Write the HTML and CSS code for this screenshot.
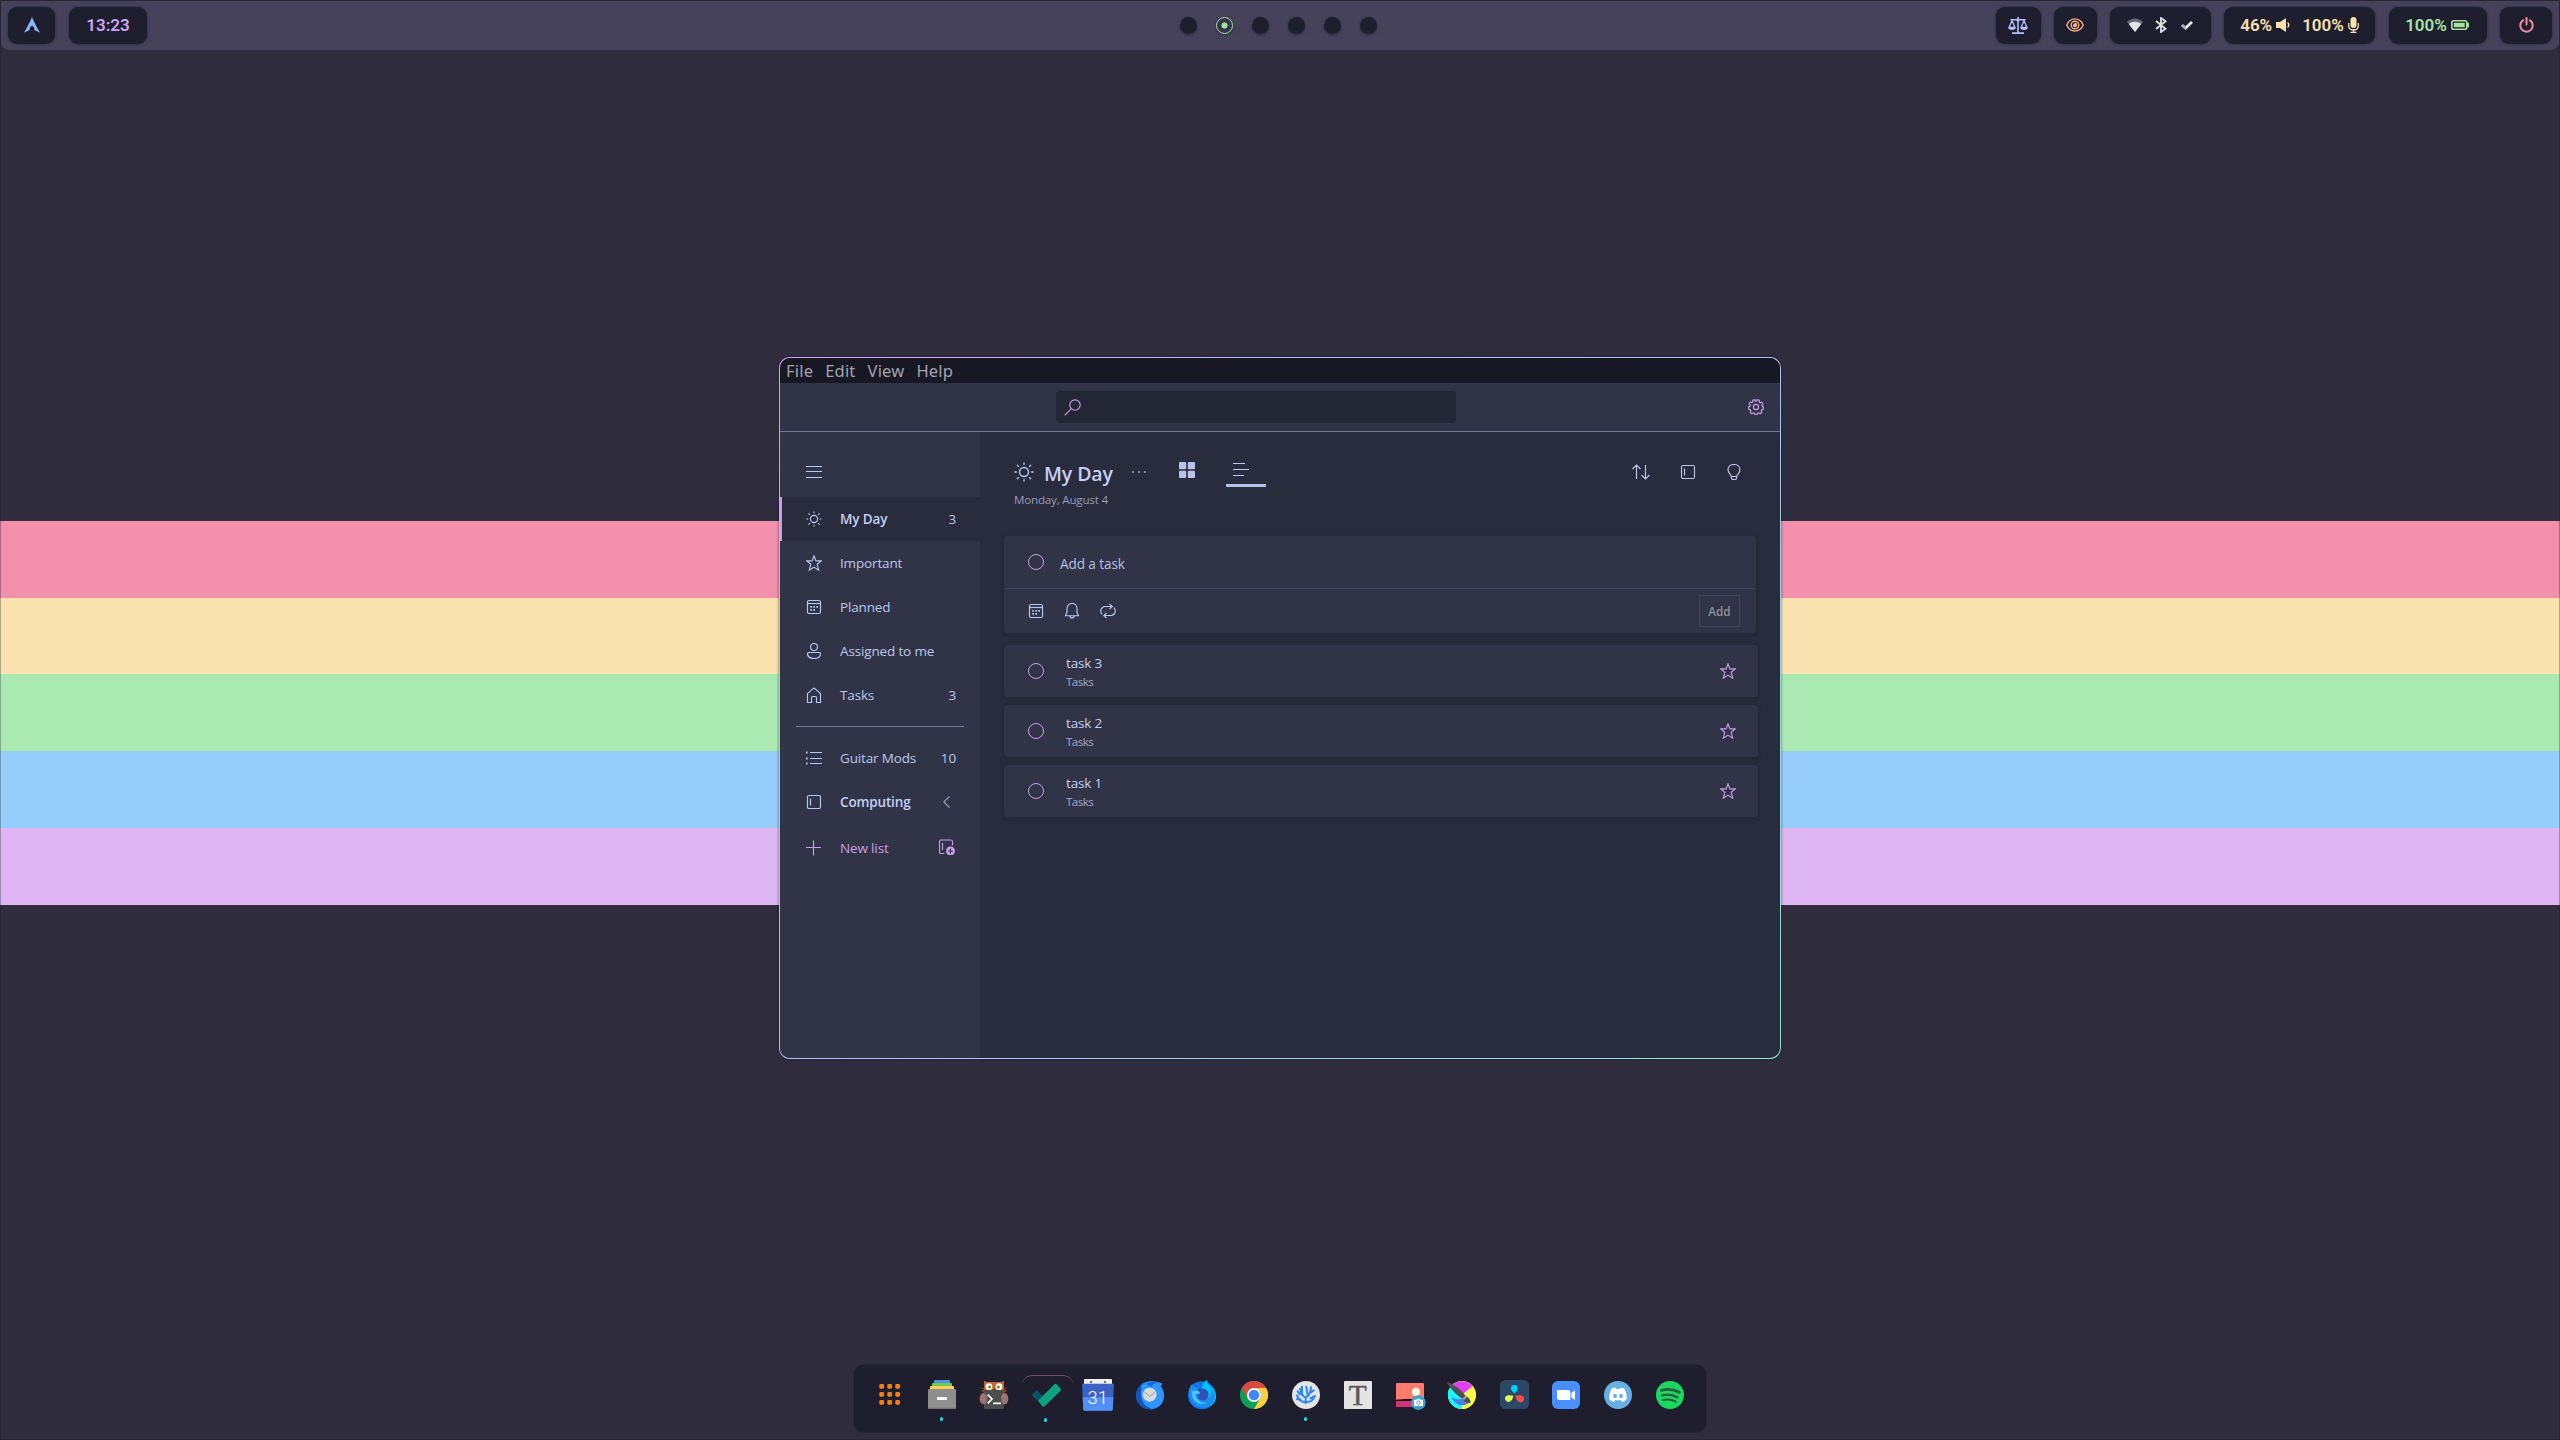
FILE: index.html
```html
<!DOCTYPE html>
<html lang="en">
<head>
<meta charset="utf-8">
<title>Desktop</title>
<link rel="stylesheet" href="styles.css">
</head>
<body>
<svg class="defs" width="0" height="0" aria-hidden="true">
  <symbol id="sun" viewBox="0 0 20 20"><circle cx="10" cy="10" r="4.5"/><path d="M10 .5v2.3M10 17.2v2.3M.5 10h2.3M17.2 10h2.3M3 3l1.8 1.8M15.2 15.2L17 17M3 17l1.8-1.8M15.2 4.8L17 3"/></symbol>
  <symbol id="star" viewBox="0 0 16 16"><path d="M8 .9l1.9 5H15.200l-4 3.400 1.500 5.900L8 12.100 3.300 15.200l1.500-5.900-4-3.400h5.300z"/></symbol>
  <symbol id="calendar" viewBox="0 0 16 16"><rect x="1.500" y="1.500" width="13" height="13" rx="1.500"/><path d="M1.500 4.500h13"/><path class="solid" d="M7.300 7h1.700v1.700H7.300zM10.300 7H12v1.700h-1.700zM4.300 7H6v1.700H4.300zM4.300 10H6v1.700H4.300zM7.300 10H9v1.700H7.300z"/></symbol>
  <symbol id="person" viewBox="0 0 16 16"><circle cx="8" cy="4" r="3.500"/><path d="M1.500 10.500a1 1 0 0 1 1-1h11a1 1 0 0 1 1 1c0 3.300-3 5-6.500 5s-6.500-1.700-6.500-5z"/></symbol>
  <symbol id="home" viewBox="0 0 16 16"><path d="M1.500 6.600L8 .9l6.500 5.700v8.900H10.500V10.500a1 1 0 0 0-1-1h-3a1 1 0 0 0-1 1v5H1.500z"/></symbol>
  <symbol id="book" viewBox="0 0 16 16"><rect x="1.500" y="1.500" width="13" height="13" rx="1.500"/><path d="M4.500 4.500v7"/></symbol>
</svg>

<header class="topbar">
  <div class="bar-left">
    <div class="pill pill-arch">
      <svg width="16" height="16" viewBox="0 0 16 16"><path fill="#89b4fa" d="M8 0c1.900 4.300 4.200 9.500 8 15.600-2.200-1.100-3.900-1.900-5.600-2.400.1-2.600-1-4.200-2.400-4.200s-2.500 1.600-2.400 4.200C3.900 13.700 2.200 14.500 0 15.600 3.800 9.500 6.100 4.300 8 0z"/></svg>
    </div>
    <div class="pill pill-clock">13:23</div>
  </div>
  <div class="workspaces">
    <i class="ws"></i><i class="ws ws-on"></i><i class="ws"></i><i class="ws"></i><i class="ws"></i><i class="ws"></i>
  </div>
  <div class="bar-right">
    <div class="pill pill-scale">
      <svg width="20" height="17" viewBox="0 0 20 17" fill="none" stroke="#b4befe" stroke-width="1.600"><path d="M2.500 2.800h15M10 0v15.500M4 16.100h12"/><path d="M4 3.500L1 10.500h6zM16 3.500l-3 7h6z" stroke-width="1.300"/><path d="M.4 10.200h7.200a3.600 2.700 0 0 1-7.200 0zM12.400 10.200h7.200a3.600 2.700 0 0 1-7.200 0z" fill="#b4befe" stroke="none"/><circle cx="10" cy="3" r="1.500" fill="#b4befe" stroke="none"/></svg>
    </div>
    <div class="pill pill-eye">
      <svg width="18" height="14" viewBox="0 0 18 14" fill="none" stroke="#fab387" stroke-width="1.400"><path d="M.8 7C2.300 3.400 5.300 .9 9 .9S15.700 3.400 17.200 7C15.700 10.600 12.700 13.100 9 13.100S2.300 10.600 .8 7z"/><circle cx="9" cy="7" r="3.800"/><path d="M6.800 7A2.200 2.200 0 0 0 9 9.200 2.200 2.200 0 0 0 9 4.800z" fill="#fab387" stroke="none"/></svg>
    </div>
    <div class="pill pill-tray">
      <svg width="16" height="14" viewBox="0 0 16 14"><path fill="#6a6a74" d="M0 4C4.300-.8 11.700-.8 16 4L8 14z"/><path fill="#e4e4e4" d="M1.800 5.900c3.600-3 8.800-3 12.400 0L8 14z"/></svg>
      <svg width="12" height="16" viewBox="0 0 12 16" fill="none" stroke="#dcdcdc" stroke-width="1.900"><path d="M1 4l9.500 7.700L6 15V1l4.500 3.300L1 12"/></svg>
      <svg width="12" height="9" viewBox="0 0 12 9"><path d="M0 5l2-1.700 2.500 2L10 0l2 1.800L4.700 9z" fill="#e8e8e8"/><path d="M0 5l2-1.700 2.800 2.300L4.700 9z" fill="#aaa"/></svg>
    </div>
    <div class="pill pill-audio">
      <span>46%</span>
      <svg class="speaker" width="14" height="14" viewBox="0 0 14 14"><path fill="#f9e2af" d="M0 4h4l6-4v14L4 10H0z"/><path d="M11.500 4.500c1.600 1.200 1.600 3.800 0 5" fill="none" stroke="#f9e2af" stroke-width="1.500"/></svg>
      <span>100%</span>
      <svg class="mic" width="11" height="16" viewBox="0 0 11 16"><rect x="2.500" width="6" height="11" rx="3" fill="#f9e2af"/><path d="M.7 6v2.500C.7 11 2.500 13 5.500 13s4.800-2 4.800-4.500V6M5.500 13v2.500M2.500 15.300h6" fill="none" stroke="#f9e2af" stroke-width="1.300"/></svg>
    </div>
    <div class="pill pill-battery">
      <span>100%</span>
      <svg width="18" height="10" viewBox="0 0 18 10"><rect x=".8" y=".8" width="14.900" height="8.400" rx="1.800" fill="none" stroke="#a6e3a1" stroke-width="1.600"/><rect x="2.800" y="2.800" width="10.900" height="4.400" fill="#a6e3a1"/><rect x="16" y="2.500" width="2" height="5" rx=".8" fill="#a6e3a1"/></svg>
    </div>
    <div class="pill pill-power">
      <svg width="15" height="16" viewBox="0 0 15 16" fill="none" stroke="#f38ba8" stroke-width="2" stroke-linecap="round"><path d="M7.500 1v6.500M4 3.400a6.200 6.200 0 1 0 7 0"/></svg>
    </div>
  </div>
</header>

<main class="desktop">
  <div class="stripes"><i class="pink"></i><i class="yellow"></i><i class="green"></i><i class="blue"></i><i class="purple"></i></div>
</main>

<section class="window">
  <div class="app">
    <nav class="menubar"><span>File</span><span>Edit</span><span>View</span><span>Help</span></nav>
    <div class="appbar">
      <div class="search"><svg class="line" width="17" height="17" viewBox="0 0 17 17"><circle cx="11" cy="6" r="5.200"/><path d="M7.300 9.700L.7 16.300"/></svg></div>
      <svg class="line gear" width="16" height="16" viewBox="0 0 16 16"><circle cx="8" cy="8" r="2.600"/><path d="M6.900 .7l.5 1.500h1.200L9.100 .7l2.200.6-.1 1.700 1 .8 1.600-.6 1.200 1.900-1.200 1.200.3 1.200 1.400.500-.2 2.200-1.500.4-.6 1.100.7 1.600-1.800 1.400-1.400-.9-1.100.4-.5 1.400H7l-.5-1.400-1.200-.4-1.400.9-1.700-1.400.6-1.600-.6-1.100-1.500-.4-.2-2.200L2 7.300l.3-1.200L1 4.900l1.300-1.900 1.600.6 1-.8-.1-1.600z"/></svg>
    </div>
    <div class="body">
      <aside class="sidebar">
        <div class="burger"><svg class="line" width="16" height="12" viewBox="0 0 16 12"><path d="M0 .5h16M0 5.500h16M0 11.500h16"/></svg></div>
        <div class="nav on"><svg class="line"><use href="#sun"/></svg><b>My Day</b><span>3</span></div>
        <div class="nav"><svg class="line"><use href="#star"/></svg><span>Important</span></div>
        <div class="nav"><svg class="line"><use href="#calendar"/></svg><span>Planned</span></div>
        <div class="nav"><svg class="line"><use href="#person"/></svg><span>Assigned to me</span></div>
        <div class="nav"><svg class="line"><use href="#home"/></svg><span>Tasks</span><span>3</span></div>
        <hr class="rule">
        <div class="nav"><svg class="line" viewBox="0 0 16 16"><path d="M4 2.500h12M4 8.500h12M4 13.500h12"/><path d="M0 2.500h1.600M0 8.500h1.600M0 13.500h1.600" stroke-width="2"/></svg><span>Guitar Mods</span><span>10</span></div>
        <div class="nav"><svg class="line"><use href="#book"/></svg><b>Computing</b><svg class="line chevron" viewBox="0 0 7 12"><path d="M6.500 .5L.8 6l5.700 5.500"/></svg></div>
        <div class="nav new"><svg class="line" viewBox="0 0 16 16"><path d="M7.500 .5v15M0 7.500h15"/></svg><span>New list</span><svg class="line" viewBox="0 0 16 16"><path d="M5.500 14.500H2A1.500 1.500 0 0 1 .5 13V2.500A1.500 1.500 0 0 1 2 1h10a1.500 1.500 0 0 1 1.500 1.500v4M3.500 4v7"/><circle class="solid" cx="11.500" cy="12" r="4.500"/><path d="M11.500 9.500v5M9 12h5" class="cut"/></svg></div>
      </aside>
      <div class="content">
        <div class="toolbar">
          <svg class="line big" viewBox="0 0 20 20"><use href="#sun"/></svg>
          <h1>My Day</h1>
          <svg class="dots" width="14" height="2" viewBox="0 0 14 2"><circle cx="1" cy="1" r="1"/><circle cx="7" cy="1" r="1"/><circle cx="13" cy="1" r="1"/></svg>
          <svg class="grid" width="16" height="16" viewBox="0 0 16 16"><rect width="7.200" height="7.200" rx="1"/><rect x="8.800" width="7.200" height="7.200" rx="1"/><rect y="8.800" width="7.200" height="7.200" rx="1"/><rect x="8.800" y="8.800" width="7.200" height="7.200" rx="1"/></svg>
          <div class="tab"><svg class="line" width="16" height="14" viewBox="0 0 16 14"><path d="M0 .5h12M0 6.500h16M0 12.500h11"/></svg></div>
          <div class="tools">
            <svg class="line" width="18" height="16" viewBox="0 0 18 16"><path d="M4.500 15V1M.5 5l4-4 4 4M13.500 1v14M9.500 11l4 4 4-4"/></svg>
            <svg class="line" width="16" height="16"><use href="#book"/></svg>
            <svg class="line" width="14" height="16" viewBox="0 0 14 16"><path d="M4.300 12.500C4 10.500 1 9 1 5.800 1 2.800 3.500.5 7 .5s6 2.300 6 5.300c0 3.200-3 4.700-3.300 6.700zM4.300 12.500l.3 2a1.200 1.200 0 0 0 1.200 1h2.400a1.200 1.200 0 0 0 1.200-1l.3-2"/></svg>
          </div>
        </div>
        <p class="date">Monday, August 4</p>
        <div class="composer">
          <div class="entry"><i class="ring"></i><span>Add a task</span></div>
          <div class="options">
            <svg class="line" width="16" height="16"><use href="#calendar"/></svg>
            <svg class="line" width="16" height="16" viewBox="0 0 16 16"><path d="M8 .5c3 0 5 2.200 5 5V9.500l1.500 3.200H1.500L3 9.500V5.500c0-2.800 2-5 5-5zM6 12.700a2 2.300 0 0 0 4 0"/></svg>
            <svg class="line" width="16" height="16" viewBox="0 0 16 16"><path d="M2.200 11.300A4.500 4.500 0 0 1 5 3.500H12M13.800 4.700A4.500 4.500 0 0 1 11 12.500H4M9.500 .8l2.700 2.700-2.700 2.700M6.500 9.800l-2.700 2.700 2.700 2.700"/></svg>
            <button class="add">Add</button>
          </div>
        </div>
        <div class="task"><i class="ring"></i><div><p>task 3</p><small>Tasks</small></div><svg class="line"><use href="#star"/></svg></div>
        <div class="task"><i class="ring"></i><div><p>task 2</p><small>Tasks</small></div><svg class="line"><use href="#star"/></svg></div>
        <div class="task"><i class="ring"></i><div><p>task 1</p><small>Tasks</small></div><svg class="line"><use href="#star"/></svg></div>
      </div>
    </div>
  </div>
</section>

<footer class="dock">
  <div class="slot"><svg viewBox="84 84 102 102" fill="#ff7f0e"><rect x="103" y="102" width="14" height="14" rx="4"/><rect x="127" y="102" width="14" height="14" rx="4"/><rect x="151" y="102" width="14" height="14" rx="4"/><rect x="103" y="126" width="14" height="14" rx="4"/><rect x="127" y="126" width="14" height="14" rx="4"/><rect x="151" y="126" width="14" height="14" rx="4"/><rect x="103" y="150" width="14" height="14" rx="4"/><rect x="127" y="150" width="14" height="14" rx="4"/><rect x="151" y="150" width="14" height="14" rx="4"/></svg></div>
  <div class="slot run"><svg viewBox="240 84 102 102"><rect x="267" y="90" width="48" height="14" rx="3" fill="#4f93dc"/><rect x="261" y="99" width="60" height="14" rx="3" fill="#6bcb55"/><rect x="255" y="108" width="72" height="14" rx="3" fill="#ffcf52"/><rect x="249" y="117" width="84" height="60" rx="4" fill="#8e8e8e"/><path d="M249 173h84a4 4 0 0 1-4 4h-76a4 4 0 0 1-4-4z" fill="#777"/><rect x="276" y="141" width="30" height="9" rx="2" fill="#fff"/></svg></div>
  <div class="slot"><svg viewBox="396 84 102 102"><path d="M405 112l12 8-11 2 11 6-8 8h76l-7-8 10-6-10-3 11-7-13 3V93l-10 5h-38l-11-5v22z" fill="#7d4234"/><path d="M417 93l10 3h40l10-3v27h-60z" fill="#c4652f"/><circle cx="432" cy="110" r="10" fill="#fff"/><circle cx="462" cy="110" r="10" fill="#fff"/><circle cx="434" cy="111" r="4.500" fill="#8b7a28"/><circle cx="460" cy="111" r="4.500" fill="#8b7a28"/><rect x="417" y="120" width="60" height="57" rx="3" fill="#4d4d4d"/><path d="M443 117h8l-4 8z" fill="#444"/><path d="M444 160h24" stroke="#fff" stroke-width="5"/><ellipse cx="415" cy="146" rx="11" ry="17" fill="#9b7570"/><ellipse cx="479" cy="146" rx="11" ry="17" fill="#9b7570"/><path d="M428 134l13 13-13 13" fill="none" stroke="#fff" stroke-width="5"/></svg></div>
  <div class="slot run active"><svg viewBox="552 84 102 102"><path d="M563 131l12-11 22 21-14 17-21-21a4 4 0 0 1 1-6z" fill="#075264"/><path d="M579 152l49-49a5 5 0 0 1 7 0l12 13a5 5 0 0 1 0 6l-48 47a6 6 0 0 1-7 0z" fill="#10a082"/></svg></div>
  <div class="slot"><svg viewBox="708 84 102 102"><rect x="717" y="87" width="84" height="20" rx="3" fill="#efefef"/><circle cx="738" cy="96" r="3" fill="#444"/><circle cx="780" cy="96" r="3" fill="#444"/><path d="M711 101h96l-4 81h-88z" fill="#3b62c4"/><path d="M713 142h92l-2 36a4 4 0 0 1-4 4h-80a4 4 0 0 1-4-4z" fill="#5290f8"/><text x="758" y="163" font-size="55" class="cal">31</text></svg></div>
  <div class="slot"><svg viewBox="864 84 102 102"><circle cx="915" cy="136" r="42" fill="#1673e6"/><path d="M889 108c14-18 42-18 64-7l-6 8c18 24 12 62-24 68-26 4-44-13-40-40z" fill="#2f96ff"/><path d="M873 138c0-15 6-24 14-34 5 10-1 20 1 32 3 22 12 34 33 40-25 6-48-12-48-38z" fill="#1254b8"/><path d="M903 103c12-10 28-10 42-6-12 0-20 6-26 14z" fill="#176ade"/><circle cx="914" cy="134" r="21" fill="#dadada"/><path d="M898 125l16 15 16-15" fill="none" stroke="#9b9b9b" stroke-width="3"/></svg></div>
  <div class="slot"><svg viewBox="1020 84 102 102"><circle cx="1071" cy="136" r="42" fill="#0f75e8"/><path d="M1070 114c2-11 7-18 16-25 0 14 9 18 17 26 12 13 13 32 4 44-9 12-24 13-36 9z" fill="#00c3f2"/><path d="M1032 126c0-10 4-19 10-25 1 6 5 9 10 11 8 0 13 3 18 9-4 3-9 4-12 8 0 17 22 27 36 10 8-9 7-20 2-27 20 16 18 49-7 59-31 9-57-14-57-45z" fill="#1a90f5"/><path d="M1040 124c9-4 18-3 26 4-4 4-10 3-15 4 2 16 14 27 32 27-20 9-44-6-43-35z" fill="#4cc8fa"/><path d="M1056 119c10-7 24-4 31 4 6 8 4 21-6 27-13 5-24-4-24-14l11-8z" fill="#3250b8"/></svg></div>
  <div class="slot"><svg viewBox="1176 84 102 102"><circle cx="1227" cy="135" r="42" fill="#109d58"/><path d="M1190.600 114A42 42 0 0 1 1263.400 114H1227a21 21 0 0 0-18.200 31.500z" fill="#dc4a3f"/><path d="M1263.400 114A42 42 0 0 1 1227 177l18.200-31.500A21 21 0 0 0 1227 114z" fill="#ffcd40"/><circle cx="1227" cy="135" r="21" fill="#fff"/><circle cx="1227" cy="135" r="16" fill="#4285f4"/></svg></div>
  <div class="slot run"><svg viewBox="42 84 102 102"><circle cx="93" cy="135" r="42" fill="#e4e4e4"/><path d="M92 160V142M92 157C78 156 70 148 66 136M92 157C106 156 115 150 118 140M92 143C84 140 79 132 75 116M92 143C100 139 106 130 108 112M75 133L68 124M81 134V110M98 136L94 110M106 128L116 121M106 145L120 138M76 148L66 148" fill="none" stroke="#2a87f5" stroke-width="6" stroke-linecap="round"/></svg></div>
  <div class="slot"><svg viewBox="198 84 102 102"><rect x="207" y="93" width="84" height="84" rx="2" fill="#e4e4e4"/><text x="248" y="165" font-size="88" class="tee">T</text></svg></div>
  <div class="slot"><svg viewBox="354 84 102 102"><rect x="363" y="99" width="84" height="72" rx="3" fill="#ff7b6e"/><circle cx="423" cy="126" r="12.500" fill="#fff8de"/><path d="M363 149l30-2h54v8h-84z" fill="#0d0208"/><path d="M363 153h84v15a3 3 0 0 1-3 3h-78a3 3 0 0 1-3-3z" fill="#d42f78"/><circle cx="430" cy="158" r="22" fill="#3fa0d0"/><path d="M417 149h7l3-3h7l3 3h7v19h-27z" fill="#fff"/><circle cx="430.500" cy="158" r="5" fill="none" stroke="#3fa0d0" stroke-width="3"/></svg></div>
  <div class="slot"><svg viewBox="510 84 102 102"><circle cx="561" cy="135" r="42" fill="#ff4"/><path d="M561 135l-33-26a42 42 0 0 1 65 0z" fill="#e040fb"/><path d="M561 135l-33-26a42 42 0 0 0 33 68z" fill="#18f7ff"/><path d="M561 135l32-26a42 42 0 0 1-32 68z" fill="#fdf94c"/><path d="M528 138c8 13 32 12 43 5l14 13c-13 15-46 15-57-18z" fill="#4880f0"/><path d="M515 96c18 5 45 23 57 43l-10 7c-20-12-38-33-47-50z" fill="#505052"/><path d="M562 146l10-8c10 4 14 12 15 21-10 0-20-3-25-13z" fill="#4b4b4b"/><path d="M562 146l10-8 4 4-9 8z" fill="#aaa"/></svg></div>
  <div class="slot"><svg viewBox="666 84 102 102"><rect x="675" y="90" width="87" height="87" rx="16" fill="#2c4866"/><path d="M718 131c-5-5-10-9-10-16a10 10 0 0 1 20 0c0 7-5 11-10 16z" fill="#00d0ff"/><path d="M715 137c-2 7-3 13-9 17a10 10 0 0 1-11-17c6-3 13-1 20 0z" fill="#e3ff55"/><path d="M721 137c7-1 14-3 20 0a10 10 0 0 1-9 19c-7-4-9-12-11-19z" fill="#ff4a4a"/></svg></div>
  <div class="slot"><svg viewBox="822 84 102 102"><rect x="831" y="93" width="84" height="84" rx="18" fill="#4a8fff"/><path d="M846 120h33a7 7 0 0 1 7 7v23h-33a7 7 0 0 1-7-7zM889 129l11-8v29l-11-8z" fill="#fff"/></svg></div>
  <div class="slot"><svg viewBox="978 84 102 102"><circle cx="1029" cy="135" r="42" fill="#68b0e4"/><path d="M1011 115l11-2 3 4h8l3-4 11 2c6 9 9 23 8 33-4 4-9 7-14 8l-4-6c-5 1-11 1-16 0l-4 6c-5-1-10-4-14-8-1-12 2-24 8-33z" fill="#fff"/><ellipse cx="1020" cy="138" rx="6" ry="6.500" fill="#68b0e4"/><ellipse cx="1038" cy="138" rx="6" ry="6.500" fill="#68b0e4"/></svg></div>
  <div class="slot"><svg viewBox="1134 84 102 102"><circle cx="1185" cy="135" r="42" fill="#1ed760"/><g fill="none" stroke="#28603a" stroke-linecap="round"><path d="M1159 121c18-5 38-3 54 6" stroke-width="8.500"/><path d="M1162 136c15-4 32-2 45 6" stroke-width="7"/><path d="M1164 150c13-3 26-2 38 5" stroke-width="5.500"/></g></svg></div>
</footer>
</body>
</html>
```
FILE: styles.css
```css
* { box-sizing: border-box; }
body {
  margin: 0;
  width: 2560px;
  height: 1440px;
  overflow: hidden;
  position: relative;
  background: #302d3f;
  font-family: "Open Sans", "Noto Sans", sans-serif;
  color: #c6d0f5;
}
body::after {
  content: "";
  position: absolute;
  inset: 0;
  border: 1px solid rgba(24, 20, 32, .3);
}
.defs { position: absolute; }
p, h1 { margin: 0; }
svg { display: block; flex: none; }

/* top bar */
.topbar {
  height: 49px;
  margin: 1px 1px 0;
  padding: 0 7px 1px;
  background: #45425a;
  border-radius: 0 0 8px 8px;
  display: grid;
  grid-template-columns: 1fr auto 1fr;
  align-items: center;
}
.bar-left, .bar-right, .workspaces { display: flex; align-items: center; }
.bar-left { gap: 14px; }
.bar-right { gap: 13.500px; justify-content: flex-end; }
.pill {
  height: 37px;
  border-radius: 9px;
  background: #1e1e2e;
  box-shadow: 0 0 3px rgba(20, 20, 32, .55);
  display: flex;
  align-items: center;
  justify-content: center;
  font: 600 17px/37px Roboto, sans-serif;
}
.pill-arch { width: 47px; }
.pill-clock { width: 78px; color: #cba6f7; }
.pill-scale { width: 45px; }
.pill-eye { width: 42.500px; }
.pill-tray { width: 100.500px; gap: 12px; padding-right: 1px; }
.pill-tray svg:last-child { margin-left: 2px; }
.pill-audio { width: 151px; color: #f9e2af; }
.pill-battery { width: 98px; color: #a6e3a1; gap: 4px; padding-right: 1px; }
.speaker { margin: 0 12px 0 4px; }
.mic { margin-left: 4px; }
.pill-power { width: 52px; padding-left: 1px; }
.workspaces { gap: 19px; margin-right: 3px; }
.ws {
  width: 17px;
  height: 17px;
  border-radius: 50%;
  background: #1e1e2e;
  box-shadow: 0 1px 3px rgba(20, 20, 32, .5);
}
.ws-on {
  border: 1.500px solid #a6e3a1;
  background: radial-gradient(circle, #a6e3a1 0 2.700px, #35364a 3.400px);
}

/* wallpaper */
.desktop { padding-top: 471px; }
.stripes { display: flex; flex-direction: column; height: 383.500px; }
.stripes i { flex: 1; }
.pink { background: #f28fad; }
.yellow { background: #fae3b0; }
.green { background: #abe9b3; }
.blue { background: #96cdfb; }
.purple { background: #ddb6f2; }

/* window */
.window {
  position: absolute;
  left: 779px;
  top: 357px;
  width: 1002px;
  height: 702px;
  padding: 1px;
  border-radius: 11px;
  background: linear-gradient(135deg, #cba6f7, #b4befe 45%, #94e2d5);
  box-shadow: 0 0 3px rgba(20, 18, 30, .6);
}
.app {
  height: 100%;
  border-radius: 10px;
  overflow: hidden;
  display: flex;
  flex-direction: column;
  background: #292c3c;
}
.menubar {
  height: 25px;
  padding-left: 6px;
  display: flex;
  gap: 12px;
  background: #181825;
  color: #a3a3ac;
  font: 16.500px/25px "Noto Sans", sans-serif;
  letter-spacing: .2px;
}
.appbar {
  height: 49px;
  border-bottom: 1px solid #737994;
  background: #303446;
  display: flex;
  align-items: center;
  justify-content: space-between;
  padding: 0 16px 0 276px;
}
.search {
  width: 400px;
  height: 32px;
  border-radius: 4px;
  background: #232634;
  display: flex;
  align-items: center;
  padding-left: 8px;
}
.line { fill: none; stroke: #bdc7ee; stroke-width: 1.150; }
.solid { fill: #bdc7ee; stroke: none; }
.search .line, .gear, .task .line, .new .line { stroke: #ca9ee6; }
.body { flex: 1; display: flex; }
.sidebar { width: 200px; background: #303446; }
.burger { height: 65px; padding: 34px 0 0 26px; }
.nav {
  height: 44px;
  padding: 0 24px 0 26px;
  display: flex;
  align-items: center;
  font-size: 13.500px;
  letter-spacing: -.15px;
  color: #bcc6ec;
}
.nav svg:first-child { width: 16px; height: 16px; margin-right: 18px; }
.nav > :nth-child(2) { flex: 1; }
.nav b { font-weight: 600; color: #c6d0f5; }
.nav.on { background: #292c3c; border-left: 2px solid #ca9ee6; padding-left: 24px; }
.nav.on .line, .big { stroke-width: 1.400; }
.chevron { width: 7px; height: 12px; margin-right: 6px; stroke: #949cbb; }
.rule { height: 1px; margin: 9px 16px; border: 0; background: #737994; }
.new { color: #ca9ee6; margin-top: 2px; }
.new svg:last-child { width: 16px; height: 16px; margin: -2px 1px 0 0; }
.new .solid { fill: #ca9ee6; stroke: none; }
.new .cut { stroke: #303446; }

.content { flex: 1; padding: 30px 22px 0 24px; }
.toolbar { display: flex; height: 28px; padding-left: 10px; }
.big { width: 20px; height: 20px; }
.toolbar h1 { margin: -2px 0 0 10px; width: 88px; font-size: 19.500px; line-height: 28px; font-weight: 600; letter-spacing: -.1px; }
.dots { margin: 9px 33px 0 0; fill: #9aa3c7; }
.grid { fill: #b9c3ea; }
.tab { width: 40px; height: 25px; margin-left: 31px; padding: 1px 0 0 7px; border-bottom: 3px solid #b9c3ea; border-radius: 1px; }
.tools { display: flex; gap: 30px; height: 20px; align-items: center; margin: 0 17px 0 auto; }
.tools svg:last-child { margin-left: 1px; }
.date { padding-left: 10px; font-size: 11.600px; line-height: 20px; letter-spacing: -.2px; color: #949cbb; }
.composer {
  width: 752px;
  height: 97px;
  margin: 26px 0 12px;
  border-radius: 4px;
  background: #303446;
  box-shadow: 0 1px 4px rgba(20, 22, 32, .3);
}
.entry { height: 53px; display: flex; align-items: center; gap: 16px; padding-left: 24px; border-bottom: 1px solid #414559; font-size: 13.600px; letter-spacing: -.1px; color: #b5bfe2; }
.entry span { padding-top: 2px; }
.ring { width: 16px; height: 16px; border: 1px solid #ca9ee6; border-radius: 50%; }
.options { height: 44px; display: flex; align-items: center; gap: 20px; padding: 0 16px 0 24px; }
.add { width: 41px; height: 32px; margin-left: auto; padding: 0; border: 1px solid #414559; background: none; color: #8f8f94; font: 600 11.700px "Open Sans", sans-serif; }
.task {
  height: 52px;
  margin-bottom: 8px;
  padding: 0 22px 0 24px;
  border-radius: 4px;
  background: #303446;
  box-shadow: 0 1px 4px rgba(20, 22, 32, .35);
  display: flex;
  align-items: center;
}
.task div { flex: 1; padding: 2px 0 0 22px; }
.task p { font-size: 13.500px; line-height: 19px; letter-spacing: -.15px; }
.task small { display: block; font-size: 11.500px; line-height: 17px; letter-spacing: -.5px; color: #a0a9cb; }
.task svg { width: 16px; height: 16px; }

/* dock */
.dock {
  position: absolute;
  left: 854px;
  top: 1365px;
  width: 852px;
  height: 67px;
  padding: 0 0 7px 19px;
  display: flex;
  align-items: center;
  gap: 18px;
  border-radius: 10px;
  background: #1e1e2e;
  box-shadow: 0 0 0 1px rgba(24, 20, 34, .35);
}
.slot { position: relative; width: 34px; height: 34px; }
.slot svg { width: 34px; height: 34px; }
.run::after {
  content: "";
  position: absolute;
  left: 14.500px;
  top: 39px;
  width: 3.500px;
  height: 3.500px;
  border-radius: 50%;
  background: #0fe0e6;
}
.active::after { top: 40px; }
.active::before {
  content: "";
  position: absolute;
  left: -8.500px;
  top: -3px;
  width: 51px;
  height: 12px;
  border: 1px solid rgba(180, 110, 150, .6);
  border-bottom: 0;
  border-radius: 11px 11px 0 0;
  -webkit-mask: linear-gradient(#000, transparent 75%);
}
.cal { font-family: Roboto, sans-serif; font-weight: 300; fill: #fff; text-anchor: middle; }
.tee { font-family: "Liberation Serif", serif; fill: #5a5a5a; stroke: #5a5a5a; stroke-width: 1.500; text-anchor: middle; }
```
